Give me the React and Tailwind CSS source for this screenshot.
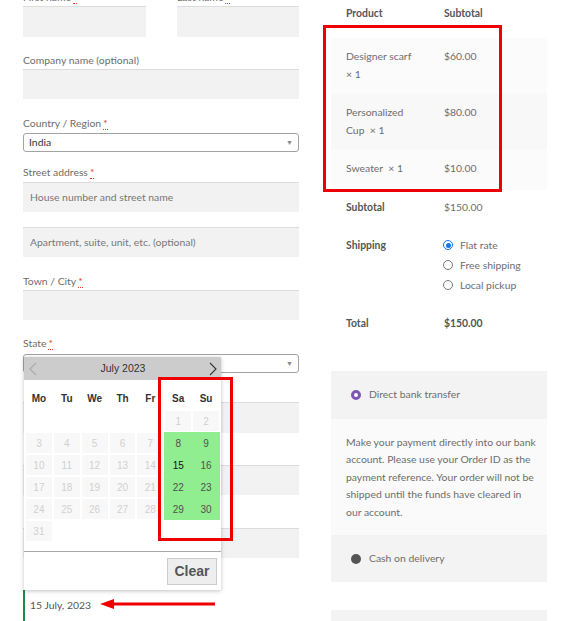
import { useState } from "react";

const Req = () => (
  <abbr className="ml-[2px] text-[#e2401c] no-underline border-b border-dotted border-[#e2401c] leading-none">*</abbr>
);

const Label = ({ children, req, className = "" }) => (
  <div className={`h-[16px] leading-[16px] text-[10.4px] text-[#6d6d6d] ${className}`}>
    {children}
    {req && <Req />}
  </div>
);

const TextBox = ({ placeholder, className = "" }) => (
  <div
    className={`h-[30px] bg-[#f2f2f2] border-t border-[#dcdcdc] flex items-center px-[7px] text-[10.4px] text-[#777] ${className}`}
  >
    {placeholder}
  </div>
);

const SelectBox = ({ value, className = "" }) => (
  <div
    className={`h-[19px] bg-white border border-[#a3a3a3] rounded-[3px] flex items-center justify-between pl-[5px] pr-[5px] text-[10.4px] text-[#333] ${className}`}
  >
    <span>{value}</span>
    <span className="text-[7px] text-[#888]">▼</span>
  </div>
);

// july 2023 starts on a saturday
const weeks = [
  [null, null, null, null, null, 1, 2],
  [3, 4, 5, 6, 7, 8, 9],
  [10, 11, 12, 13, 14, 15, 16],
  [17, 18, 19, 20, 21, 22, 23],
  [24, 25, 26, 27, 28, 29, 30],
  [31, null, null, null, null, null, null],
];

const dayNames = ["Mo", "Tu", "We", "Th", "Fr", "Sa", "Su"];

function DatePicker() {
  const [picked] = useState(15);

  return (
    <div className="absolute top-[3px] left-[1px] w-[197px] h-[233px] bg-white shadow-[0_1px_4px_rgba(0,0,0,0.25)] font-['Liberation_Sans',Arial,sans-serif] z-10 flex flex-col">
      {/* header */}
      <div className="h-[23px] bg-[#cccccc] flex items-center justify-between pl-[4px] pr-[3px]">
        <svg width="10" height="14" viewBox="0 0 10 14">
          <polyline points="8,1 2,7 8,13" fill="none" stroke="#aaaaaa" strokeWidth="1.1" />
        </svg>
        <span className="text-[10.5px] text-[#333]">July 2023</span>
        <svg width="10" height="14" viewBox="0 0 10 14">
          <polyline points="2,1 8,7 2,13" fill="none" stroke="#333333" strokeWidth="1.1" />
        </svg>
      </div>

      {/* day names */}
      <div className="grid grid-cols-7 px-[1px] mt-[6px] h-[24px] items-center">
        {dayNames.map((d) => (
          <div key={d} className="text-center text-[10px] font-bold text-[#333]">
            {d}
          </div>
        ))}
      </div>

      {/* days */}
      <div className="grid grid-cols-7 px-[1px]">
        {weeks.flat().map((day, i) => {
          const weekend = i % 7 >= 5;
          if (day === null) return <div key={i} className="h-[22px]" />;
          const active = weekend && day >= 8;
          return (
            <div
              key={i}
              className={`h-[22px] flex items-center justify-center text-[10px] border ${
                active
                  ? "bg-[#90ee90] border-[#90ee90] text-[#505050]"
                  : "bg-[#f8f8f8] border-white text-[#d0d0d0]"
              } ${day === picked ? "!text-[#111]" : ""}`}
            >
              {day}
            </div>
          );
        })}
      </div>

      {/* footer */}
      <div className="mt-auto border-t border-[#aaaaaa] flex justify-end pt-[6px] pb-[5px] pr-[4px]">
        <button className="w-[50px] h-[27px] bg-[#eeeeee] border border-[#cccccc] text-[14px] font-bold text-[#555]">
          Clear
        </button>
      </div>
    </div>
  );
}

function Radio({ checked }) {
  return checked ? (
    <span className="w-[10px] h-[10px] rounded-full border-[1.5px] border-[#1a73e8] bg-white flex items-center justify-center">
      <span className="w-[5px] h-[5px] rounded-full bg-[#1a73e8]" />
    </span>
  ) : (
    <span className="w-[10px] h-[10px] rounded-full border border-[#777] bg-white" />
  );
}

function BillingForm() {
  return (
    <div className="w-[276px] ml-[23px] shrink-0 relative">
      <div className="flex justify-between -mt-[11px]">
        <div className="w-[123px]">
          <Label req>First name</Label>
          <TextBox className="mt-[1px] h-[31px]" />
        </div>
        <div className="w-[122px]">
          <Label req>Last name</Label>
          <TextBox className="mt-[1px] h-[31px]" />
        </div>
      </div>

      <Label className="mt-[15px]">Company name (optional)</Label>
      <TextBox className="mt-[1px]" />

      <Label className="mt-[16px]" req>Country / Region</Label>
      <SelectBox className="mt-[2px]" value="India" />

      <Label className="mt-[12px]" req>Street address</Label>
      <TextBox className="mt-[2px]" placeholder="House number and street name" />
      <TextBox className="mt-[15px]" placeholder="Apartment, suite, unit, etc. (optional)" />

      <Label className="mt-[16px]" req>Town / City</Label>
      <TextBox className="mt-[1px]" />

      <Label className="mt-[15px]" req>State</Label>
      <div className="relative mt-[3px]">
        <SelectBox value="" />
        <DatePicker />
      </div>

      <TextBox className="mt-[29px] h-[31px]" />
      <TextBox className="mt-[32px]" />
      <TextBox className="mt-[33px]" />

      <div className="mt-[32px] h-[31px] border-l-2 border-[#1e8a4c] flex items-center pl-[5px] text-[10.4px] text-[#555]">
        15 July, 2023
      </div>
    </div>
  );
}

const items = [
  { name: "Designer scarf", second: "× 1", price: "$60.00", bg: "bg-[#fbfbfb]", h: "h-[56px]" },
  { name: "Personalized", second: "Cup  × 1", price: "$80.00", bg: "bg-[#f8f8f8]", h: "h-[56px]" },
  { name: "Sweater  × 1", second: null, price: "$10.00", bg: "bg-[#fbfbfb]", h: "h-[40px]" },
];

const bankText = [
  "Make your payment directly into our bank",
  "account. Please use your Order ID as the",
  "payment reference. Your order will not be",
  "shipped until the funds have cleared in",
  "our account.",
];

function OrderReview() {
  return (
    <div className="w-[216px] ml-[32px] shrink-0 text-[10.4px] text-[#6d6d6d]">
      <div className="h-[38px] flex pt-[5px] font-bold text-[#555]">
        <span className="w-[113px] pl-[15px] leading-[16px]">Product</span>
        <span className="leading-[16px]">Subtotal</span>
      </div>

      {items.map((it) => (
        <div key={it.price} className={`${it.bg} ${it.h} flex pt-[9px] leading-[18px]`}>
          <div className="w-[113px] pl-[15px] whitespace-pre">
            <div>{it.name}</div>
            {it.second && <div>{it.second}</div>}
          </div>
          <div>{it.price}</div>
        </div>
      ))}

      <div className="flex pt-[8px] leading-[18px]">
        <span className="w-[113px] pl-[15px] font-bold text-[#555]">Subtotal</span>
        <span>$150.00</span>
      </div>

      <div className="flex mt-[19px] leading-[20px]">
        <span className="w-[113px] pl-[15px] font-bold text-[#555]">Shipping</span>
        <div className="flex flex-col">
          {[
            ["Flat rate", true],
            ["Free shipping", false],
            ["Local pickup", false],
          ].map(([label, on]) => (
            <div key={label} className="flex items-center gap-[7px] -ml-[1px]">
              <Radio checked={on} />
              <span>{label}</span>
            </div>
          ))}
        </div>
      </div>

      <div className="flex mt-[19px] leading-[18px] font-bold text-[#555]">
        <span className="w-[113px] pl-[15px]">Total</span>
        <span>$150.00</span>
      </div>

      <div className="mt-[39px]">
        <div className="h-[48px] bg-[#f3f3f3] flex items-center pl-[20px] gap-[8px]">
          <span className="w-[10px] h-[10px] rounded-full border-[3px] border-[#7f54b3] bg-white" />
          <span>Direct bank transfer</span>
        </div>
        <div className="bg-[#fafafa] pl-[15px] pr-[6px] pt-[15px] leading-[17.4px] h-[116px] whitespace-nowrap">
          {bankText.map((line) => (
            <div key={line}>{line}</div>
          ))}
        </div>
        <div className="h-[47px] bg-[#f3f3f3] flex items-center pl-[20px] gap-[8px]">
          <span className="w-[10px] h-[10px] rounded-full bg-[#555]" />
          <span>Cash on delivery</span>
        </div>
        <div className="mt-[28px] h-[20px] bg-[#f3f3f3]" />
      </div>
    </div>
  );
}

export default function App() {
  return (
    <div className="relative w-[561px] h-[621px] overflow-hidden bg-white font-['Lato','Noto_Sans',sans-serif]">
      <div className="flex">
        <BillingForm />
        <OrderReview />
      </div>

      {/* red annotations */}
      <div className="absolute left-[158px] top-[377px] w-[75px] h-[164px] border-[3px] border-[#ee0000] z-20" />
      <div className="absolute left-[323px] top-[25px] w-[179px] h-[167px] border-[3px] border-[#ee0000] z-20" />
      <svg className="absolute left-[98px] top-[597px] z-20" width="120" height="14" viewBox="0 0 120 14">
        <line x1="12" y1="7" x2="117" y2="7" stroke="#ee0000" strokeWidth="3" />
        <polygon points="2,7 16,2 16,12" fill="#ee0000" />
      </svg>
    </div>
  );
}
